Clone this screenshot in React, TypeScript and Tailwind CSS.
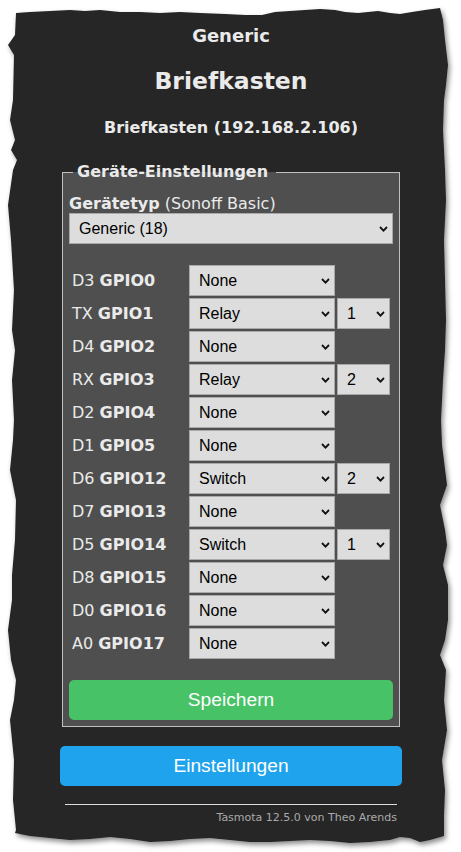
import React from 'react';

type GpioRow = {
  pin: string;
  gpio: string;
  value: string;
  index?: string;
};

const rows: GpioRow[] = [
  { pin: 'D3', gpio: 'GPIO0', value: 'None' },
  { pin: 'TX', gpio: 'GPIO1', value: 'Relay', index: '1' },
  { pin: 'D4', gpio: 'GPIO2', value: 'None' },
  { pin: 'RX', gpio: 'GPIO3', value: 'Relay', index: '2' },
  { pin: 'D2', gpio: 'GPIO4', value: 'None' },
  { pin: 'D1', gpio: 'GPIO5', value: 'None' },
  { pin: 'D6', gpio: 'GPIO12', value: 'Switch', index: '2' },
  { pin: 'D7', gpio: 'GPIO13', value: 'None' },
  { pin: 'D5', gpio: 'GPIO14', value: 'Switch', index: '1' },
  { pin: 'D8', gpio: 'GPIO15', value: 'None' },
  { pin: 'D0', gpio: 'GPIO16', value: 'None' },
  { pin: 'A0', gpio: 'GPIO17', value: 'None' },
];

// torn paper outline, clockwise from top-left
const paper =
  '16,13 30,12 50,11 70,10 85,11 100,10 120,12 140,12 160,13 180,12 200,13 225,14 245,15 262,15 275,12 290,11 305,10 320,9 335,10 345,12 358,13 368,12 378,11 390,13 400,14 412,12 425,10 440,8 ' +
  '443,20 445,40 448,65 446,85 444,100 443,130 445,170 446,200 444,240 445,280 446,320 445,350 443,380 441,420 442,445 447,485 440,505 445,530 447,545 443,565 448,585 448,620 445,640 440,655 446,670 444,700 447,730 442,760 445,790 444,815 444,836 ' +
  '430,840 420,842 410,838 400,837 390,840 370,842 350,843 330,841 310,840 290,841 270,842 250,842 230,840 210,838 190,839 170,841 150,842 130,839 110,837 90,839 70,840 50,838 30,836 15,833 ' +
  '16,830 13,800 14,760 10,720 14,700 16,680 11,660 8,630 12,600 12,575 15,540 16,500 10,470 13,440 14,420 12,380 15,350 12,330 14,290 11,240 8,205 13,170 17,160 11,150 15,140 10,120 13,100 14,55 8,45 15,35';

const Chevron: React.FC = () => (
  <svg
    width="9"
    height="6"
    viewBox="0 0 9 6"
    className="pointer-events-none absolute right-[5px] top-1/2 -translate-y-1/2"
  >
    <path d="M1 1 L4.5 4.6 L8 1" fill="none" stroke="#111" strokeWidth="1.8" />
  </svg>
);

const Select: React.FC<{ value: string; className?: string }> = ({ value, className }) => (
  <div className={`relative ${className ?? ''}`}>
    <select
      defaultValue={value}
      className="h-full w-full appearance-none border border-[#a9a9a9] bg-[#dddddd] pl-[9px] font-['Liberation_Sans',Arial,sans-serif] text-[16px] text-black outline-none"
    >
      <option>{value}</option>
    </select>
    <Chevron />
  </div>
);

const App: React.FC = () => {
  return (
    <div className="relative h-[852px] w-[461px] overflow-hidden bg-white">
      <svg width="461" height="852" className="absolute inset-0">
        <defs>
          <filter id="shadow" x="-5%" y="-5%" width="110%" height="110%">
            <feDropShadow dx="2" dy="3" stdDeviation="2.5" floodColor="#000" floodOpacity="0.45" />
          </filter>
        </defs>
        <polygon points={paper} fill="#252525" filter="url(#shadow)" />
      </svg>

      <div className="relative ml-[60px] w-[342px] pt-[25px] text-center font-['DejaVu_Sans',Verdana,sans-serif] text-[#eaeaea]">
        <h3 className="text-[18px] font-bold leading-[22px]">Generic</h3>
        <h2 className="mt-[20px] text-[23.5px] font-bold leading-[28px]">Briefkasten</h2>
        <h3 className="mt-[23px] text-[16px] font-bold leading-[20px]">Briefkasten (192.168.2.106)</h3>

        <fieldset className="mx-[2px] mt-[24px] border border-[#c0c0c0] bg-[#4f4f4f] px-[6px] pb-[6px] text-left">
          <legend className="ml-[4px] pl-[4px] pr-[8px] text-[16px] font-bold leading-[20px]">
            Geräte-Einstellungen
          </legend>

          <p className="mt-[12px] text-[16px] leading-[19px]">
            <b>Gerätetyp</b> (Sonoff Basic)
          </p>
          <Select value="Generic (18)" className="h-[31px] w-full" />

          <div className="mt-[21px] grid grid-cols-[118px_146px_53px] gap-x-[2px] gap-y-[2px]">
            {rows.map((row) => (
              <React.Fragment key={row.gpio}>
                <div className="flex h-[31px] items-center pl-[3px] text-[16px]">
                  {row.pin}&nbsp;<b>{row.gpio}</b>
                </div>
                <Select value={row.value} className="h-[31px]" />
                {row.index ? <Select value={row.index} className="h-[31px]" /> : <div />}
              </React.Fragment>
            ))}
          </div>

          <button className="mt-[21px] h-[40px] w-full rounded-[5px] bg-[#47c266] font-['Liberation_Sans',Arial,sans-serif] text-[19.2px] text-white">
            Speichern
          </button>
        </fieldset>

        <button className="mt-[19px] h-[40px] w-full rounded-[5px] bg-[#1fa3ec] font-['Liberation_Sans',Arial,sans-serif] text-[19.2px] text-white">
          Einstellungen
        </button>

        <div className="px-[5px]">
          <hr className="mt-[18px] border-t border-[#dddddd]" />
          <p className="mt-[6px] text-right text-[11px] leading-[13px] text-[#aaaaaa]">
            Tasmota 12.5.0 von Theo Arends
          </p>
        </div>
      </div>
    </div>
  );
};

export default App;
